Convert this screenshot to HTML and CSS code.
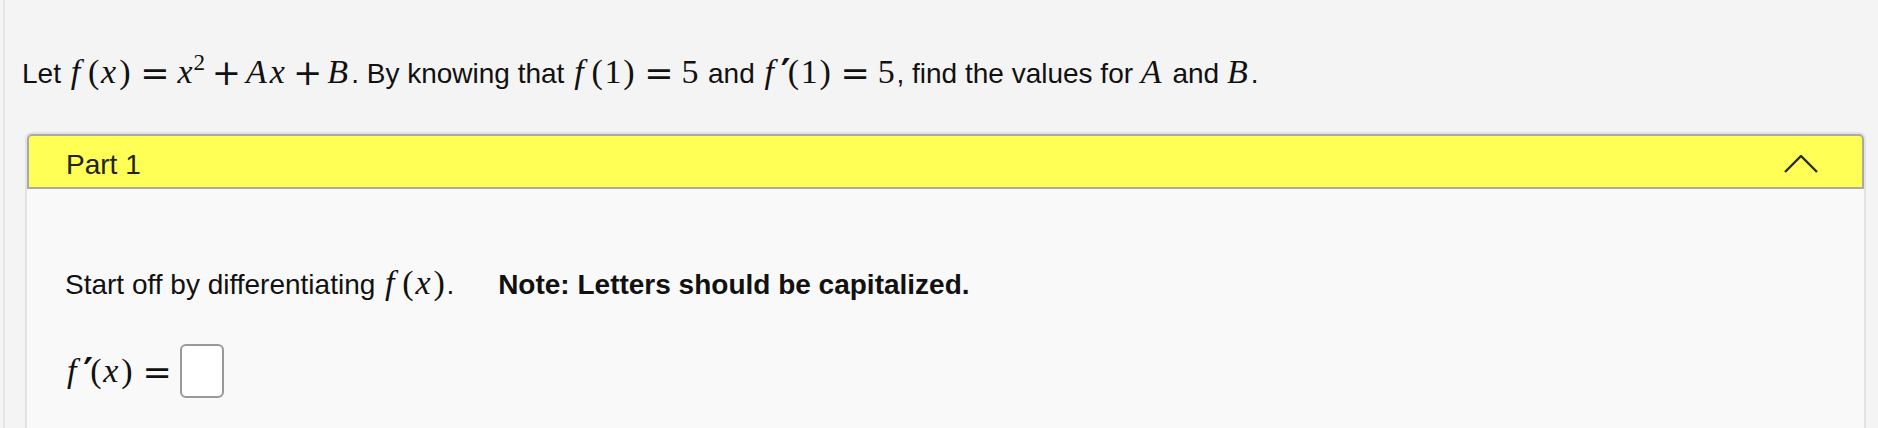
FILE: index.html
```html
<!DOCTYPE html>
<html lang="en">
<head>
    <meta charset="UTF-8">
    <meta name="viewport" content="width=device-width, initial-scale=1.0">
    <title>Part 1</title>
    <link rel="stylesheet" href="styles.css">
</head>
<body>
    <div class="page">
        <p class="question">Let <span class="math"><i class="fn">f</i>(<i>x</i>)<span class="rel">=</span><i>x</i><sup>2</sup><span class="bin">+</span><i>A</i><i>x</i><span class="bin">+</span><i>B</i></span>. By knowing that <span class="math"><i class="fn">f</i>(1)<span class="rel">=</span>5</span> and <span class="math"><i class="fn">f</i><span class="prime">′</span>(1)<span class="rel">=</span>5</span>, find the values for <span class="math"><i>A</i></span> and <span class="math"><i>B</i></span>.</p>

        <div class="card">
            <div class="card-header">
                <span class="card-title">Part 1</span>
                <svg class="chevron" width="34" height="18" viewBox="0 0 34 18">
                    <polyline points="1,17 17,1 33,17" fill="none" stroke="#2b2b2b" stroke-width="2.4"/>
                </svg>
            </div>

            <div class="card-body">
                <p class="prompt">Start off by differentiating <span class="math"><i class="fn">f</i>(<i>x</i>)</span>. <strong class="note">Note: Letters should be capitalized.</strong></p>
                <p class="answer-row"><span class="math"><i class="fn">f</i><span class="prime">′</span>(<i>x</i>)<span class="rel">=</span></span><span class="answer-box"></span></p>
            </div>
        </div>
    </div>
</body>
</html>
```

FILE: styles.css
```css
body {
    margin: 0;
    background: #f4f4f4;
    color: #111;
    font-family: "Liberation Sans", Arial, Helvetica, sans-serif;
}

.page {
    margin-left: 3px;
    border-left: 2px solid #e6e6e6;
    padding: 54px 12px 0 20px;
    min-height: 500px;
}

.question {
    margin: 0 0 39px -3px;
    font-size: 28px;
    line-height: 39px;
}

/* math set in a serif, roughly like the TeX output */
.math {
    font-family: "Liberation Serif", "Times New Roman", serif;
    font-size: 34px;
    line-height: 0;
    letter-spacing: 0.05em;
}

.math i {
    font-style: italic;
    padding-right: 0.04em;
}

.math i.fn {
    padding: 0 0.18em 0 0.06em;
}

.math i + sup {
    margin-left: -0.1em;
}

.math sup {
    font-size: 0.68em;
    vertical-align: 0.55em;
}

.math .prime {
    font-family: "DejaVu Sans", sans-serif;
    font-size: 1.1em;
    font-weight: bold;
    letter-spacing: 0;
    vertical-align: -0.06em;
    margin: 0 -3px 0 -1px;
}

.math .rel,
.math .bin {
    font-family: "DejaVu Serif", serif;
    font-size: 35px;
    letter-spacing: 0;
    vertical-align: -2px;
}

.math .rel {
    margin: 0 8px;
}

.math .bin {
    margin: 0 5px;
}

.card {
    border: 2px solid #e3e3e3;
    border-bottom: none;
    border-radius: 7px 7px 0 0;
    background: #f9f9f9;
}

.card-header {
    display: flex;
    justify-content: space-between;
    align-items: flex-start;
    padding: 13px 44px 6px 37px;
    background: #ffff55;
    border: 2px solid #a9a9a9;
    border-radius: 5px 5px 0 0;
    color: #222;
    font-size: 28px;
    line-height: 32px;
}

.chevron {
    align-self: center;
    margin-top: -3px;
}

.card-body {
    padding: 76px 0 120px 38px;
}

.prompt {
    margin: 0 0 40px;
    font-size: 28px;
    line-height: 39px;
}

.note {
    margin-left: 36px;
}

.answer-row {
    margin: 0;
    font-size: 28px;
    line-height: 39px;
}

.answer-box {
    display: inline-block;
    width: 40px;
    height: 50px;
    border: 2px solid #999;
    border-radius: 6px;
    background: #fff;
    vertical-align: -16px;
}
```
